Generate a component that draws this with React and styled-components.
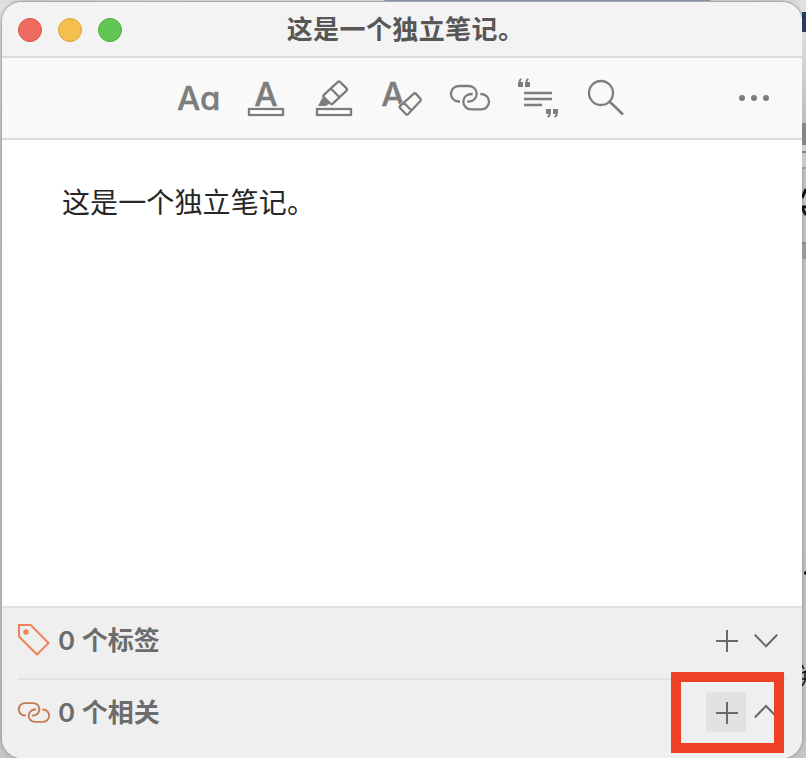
import React from "react";
import styled, { createGlobalStyle } from "styled-components";

const GlobalStyle = createGlobalStyle`
  * { box-sizing: border-box; }
  body { margin: 0; overflow: hidden; background: #cfcfcf; }
`;

const Desktop = styled.div`
  width: 806px;
  height: 758px;
  display: grid;
  grid-template-columns: 802px 4px;
  position: relative;
  overflow: hidden;
  background: linear-gradient(90deg, #dcdcdc 0, #e4e4e4 384px, #8f9cbe 385px, #8f9cbe 710px, #dededa 711px, #dcdcd8 100%) 0 0 / 806px 3px no-repeat,
    linear-gradient(180deg, #e2e2e2, #c9c9c9 20%, #c6c6c6);
  font-family: "Noto Sans CJK SC", sans-serif;
`;

const Window = styled.main`
  margin: 2px 0 0 2px;
  width: 800px;
  height: 756px;
  display: flex;
  flex-direction: column;
  background: #fff;
  border-radius: 20px;
  overflow: hidden;
  box-shadow: 0 0 0 1px #a9a9a9, 0 0 4px 1px rgba(0, 0, 0, 0.2);
`;

const TitleBar = styled.header`
  flex: 0 0 56px;
  display: grid;
  grid-template-columns: 128px 1fr 128px;
  align-items: center;
  padding: 0 8px 0 16px;
  background: #f3f3f3;
  border-bottom: 2px solid #dadada;
`;

const Lights = styled.div`
  display: flex;
  gap: 16px;
  padding-top: 1px;
`;

const Light = styled.span`
  width: 24px;
  height: 24px;
  border-radius: 50%;
  background: ${(p) => p.$fill};
  border: 1px solid ${(p) => p.$edge};
`;

const Title = styled.h1`
  margin: 0 1px 3px 0;
  text-align: center;
  font-size: 26px;
  line-height: 38px;
  letter-spacing: 0.4px;
  font-weight: 700;
  color: #575757;
`;

const Toolbar = styled.nav`
  flex: 0 0 82px;
  display: flex;
  align-items: center;
  padding: 0 14px 0 162px;
  background: #f9f9f9;
  border-bottom: 2px solid #dadada;
`;

const Tool = styled.button`
  width: 68px;
  height: 80px;
  padding: 0;
  border: 0;
  background: none;
  display: flex;
  align-items: center;
  justify-content: center;
  color: #7d7d7d;
  &:last-child { margin-left: auto; }
`;

const Glyph = styled.svg`
  display: block;
  width: ${(p) => p.$w || 44}px;
  height: ${(p) => p.$h || 44}px;
  overflow: visible;
  fill: none;
  stroke: currentColor;
  stroke-width: ${(p) => p.$stroke || 2};
  text {
    font-family: Inter, sans-serif;
    font-size: 33px;
    font-weight: 500;
    font-feature-settings: "cv11" 1;
    fill: currentColor;
    stroke: currentColor;
    stroke-width: 0.4px;
  }
`;

const PlusGlyph = styled(Glyph)`
  margin: 2px 0 0 2px;
`;

const Note = styled.article`
  flex: 1;
  padding: 40px 60px;
  font-size: 28px;
  line-height: 42px;
  letter-spacing: 0.12px;
  color: #262626;
`;

const Footer = styled.footer`
  flex: 0 0 152px;
  padding: 0 16px;
  background: #efefef;
  border-top: 2px solid #e1e1e1;
`;

const Row = styled.section`
  height: 72px;
  display: flex;
  align-items: center;
  padding-bottom: ${(p) => (p.$divided ? 6 : 8)}px;
  border-bottom: ${(p) => (p.$divided ? "2px solid #e2e2e2" : "0")};
`;

const RowLabel = styled.span`
  flex: 1;
  margin: 2px 0 0 8px;
  font-family: Inter, "Noto Sans CJK SC", sans-serif;
  font-size: 26px;
  line-height: 38px;
  font-weight: 600;
  color: #6c6c6c;
`;

const SmallButton = styled.button`
  width: 40px;
  height: 40px;
  padding: 0;
  border: 0;
  border-radius: 4px;
  display: flex;
  align-items: center;
  justify-content: center;
  color: #696969;
  background: ${(p) => (p.$active ? "#e2e2e2" : "transparent")};
`;

const RowIcon = styled.span`
  display: flex;
  width: 32px;
  color: ${(p) => p.$tone};
`;

const Highlight = styled.div`
  position: absolute;
  left: 671px;
  top: 672px;
  width: 113px;
  height: 81px;
  border: 10px solid #ee4025;
`;

const Behind = styled.aside`
  display: flex;
  flex-direction: column;
  overflow: hidden;
`;

const Slice = styled.span`
  flex: 0 0 ${(p) => p.$h}px;
  background: ${(p) => p.$bg || "transparent"};
`;

const BehindGlyph = styled.svg`
  flex: none;
  display: block;
  width: 4px;
  height: ${(p) => p.$h}px;
  fill: none;
  stroke: #111;
`;

function LinkShape() {
  return (
    <>
      <path d="M12 25.5H10.7A7.75 7.75 0 0 1 10.7 10H21A7.75 7.75 0 0 1 21 25.5H19.3" />
      <path d="M24.7 18H23A7.7 7.7 0 0 0 23 33.4H33.3A7.7 7.7 0 0 0 33.3 18H32.3" />
    </>
  );
}

const tools = [
  ["Font", <text x="22.7" y="34" textAnchor="middle">Aa</text>],
  ["Text color", <><text x="22" y="30" textAnchor="middle">A</text><rect x="5" y="33" width="34" height="6" fill="#fff" /></>],
  ["Highlight", <>
    <path d="M25.6 6.2Q27 4.8 28.4 6.2L34.3 12.1Q35.7 13.5 34.3 14.9L20.7 27.6Q19.5 28.7 18.3 27.5L11.9 21.2Q10.7 20 11.9 18.8ZM18.8 12.5L27.3 21" />
    <path d="M10.5 21.5L6 30H14L18 27Z" fill="currentColor" stroke="none" />
    <rect x="5" y="33" width="34" height="6" fill="#fff" />
  </>],
  ["Clear style", <>
    <text x="1.3" y="30">A</text>
    <path d="M34 18.4L41 24.4L27 38L19.5 31Z" fill="#f9f9f9" stroke="#f9f9f9" strokeWidth="4" />
    <path d="M33.6 17.9Q34.8 16.7 36 17.9L40.3 22.6Q41.5 23.8 40.3 25L28.2 38Q27 39.2 25.8 38L20.2 32.3Q19 31.1 20.2 29.9ZM23.7 26.5L31.5 34.5" />
  </>],
  ["Link", <LinkShape />],
  ["Quote", <>
    <path d="M8 17H36M8 23H36M8 29H26" />
    <path stroke="none" fill="currentColor" d="M2 11V7.5Q2 4 4.5 2.3L6 3.3Q4.5 4.5 4.5 6H7V11ZM9 11V7.5Q9 4 11.5 2.3L13 3.3Q11.5 4.5 11.5 6H14V11ZM30 33H35V36.5Q35 40 32.5 41.7L31 40.7Q32.5 39.5 32.5 38H30ZM37 33H42V36.5Q42 40 39.5 41.7L38 40.7Q39.5 39.5 39.5 38H37Z" />
  </>],
  ["Search", <><circle cx="17" cy="17" r="12" /><path d="M25.5 25.5L39 38.5" strokeWidth="2.6" /></>],
  ["More", <g fill="currentColor" stroke="none"><circle cx="10" cy="22" r="3" /><circle cx="22" cy="22" r="3" /><circle cx="34" cy="22" r="3" /></g>],
];

function Related({ icon, tone, label, divided, active, open }) {
  return (
    <Row $divided={divided}>
      <RowIcon $tone={tone}>{icon}</RowIcon>
      <RowLabel>{label}</RowLabel>
      <SmallButton $active={active} aria-label="Add">
        <PlusGlyph $w={22} $h={22} viewBox="0 0 22 22"><path d="M0 11H22M11 0V22" /></PlusGlyph>
      </SmallButton>
      <SmallButton aria-label="Toggle">
        <Glyph $w={24} $h={24} viewBox="0 0 24 24"><path d={open ? "M.8 17.5L12 6L23.2 17.5" : "M.8 6.8L12 18.2L23.2 6.8"} /></Glyph>
      </SmallButton>
    </Row>
  );
}

export default function App() {
  return (
    <>
      <GlobalStyle />
      <Desktop>
        <Window>
          <TitleBar>
            <Lights>
              <Light $fill="#ed6a5f" $edge="#d9544b" />
              <Light $fill="#f5bf4f" $edge="#dca23c" />
              <Light $fill="#62c655" $edge="#4fae3d" />
            </Lights>
            <Title>这是一个独立笔记。</Title>
          </TitleBar>
          <Toolbar>
            {tools.map(([name, art]) => (
              <Tool key={name} aria-label={name}>
                <Glyph $stroke={2.3} viewBox="0 0 44 44">{art}</Glyph>
              </Tool>
            ))}
          </Toolbar>
          <Note>这是一个独立笔记。</Note>
          <Footer>
            <Related
              divided
              tone="#f0825a"
              label="0 个标签"
              icon={
                <Glyph $w={32} $h={32} viewBox="0 0 32 32">
                  <path d="M1 1H12.7L30.5 19L19 30.5L1 12.5Z" />
                  <circle cx="8" cy="8" r="2.7" fill="currentColor" stroke="none" />
                </Glyph>
              }
            />
            <Related
              active
              open
              tone="#c67d55"
              label="0 个相关"
              icon={<Glyph $w={32} $h={21} $stroke={2.4} viewBox="2 8.6 40 26.25"><LinkShape /></Glyph>}
            />
          </Footer>
        </Window>
        <Behind>
          <Slice $h={12} $bg="#dfe0df" />
          <Slice $h={20} $bg="#263d59" />
          <Slice $h={91} $bg="linear-gradient(#dedede, #bdbdbd)" />
          <Slice $h={22} $bg="#858585" />
          <Slice $h={6} $bg="#cfcfcf" />
          <Slice $h={2} $bg="#858585" />
          <Slice $h={14} $bg="#c9c9c9" />
          <Slice $h={2} $bg="#a0a0a0" />
          <Slice $h={17} />
          <BehindGlyph $h={34} viewBox="0 0 4 34" strokeWidth="3">
            <path d="M0 12L4 3M0 21H4M0 22L4 29" />
          </BehindGlyph>
          <Slice $h={22} />
          <Slice $h={2} $bg="#858585" />
          <Slice $h={15} $bg="#999" />
          <Slice $h={311} />
          <BehindGlyph $h={8} viewBox="0 0 4 8"><circle cx="4" cy="3" r="2" fill="#111" stroke="none" /></BehindGlyph>
          <Slice $h={86} />
          <BehindGlyph $h={24} viewBox="0 0 4 24" strokeWidth="1.5">
            <path d="M0 1L2 5M0 9L4 7M0 15H4M3 8V17L0 22" />
          </BehindGlyph>
        </Behind>
        <Highlight />
      </Desktop>
    </>
  );
}
